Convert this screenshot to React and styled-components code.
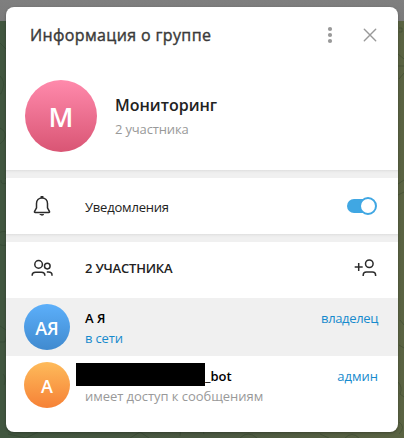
import React from 'react';
import styled, { createGlobalStyle } from 'styled-components';

const GlobalStyle = createGlobalStyle`
  * { box-sizing: border-box; }
  body { margin: 0; font-family: 'Open Sans', 'Noto Sans', sans-serif; font-size: 13px; color: #222; }
`;

const Backdrop = styled.div`
  position: relative;
  width: 404px;
  height: 438px;
  padding: 7px 6px 6px;
  overflow: hidden;
  background: linear-gradient(#7f7f7f, #7b7b7b) top / 100% 21px no-repeat,
    linear-gradient(90deg, #41563f, #4a5841 50%, #5a6342);
`;

const Doodles = styled.svg`
  position: absolute;
  inset: 0;
  fill: none;
  stroke: #2c3c28;
  stroke-opacity: 0.35;
`;

const Card = styled.main`
  position: relative;
  height: 425px;
  border-radius: 8px;
  background: #fff;
  overflow: hidden;
  box-shadow: 0 1px 3px rgba(0, 0, 0, 0.3);
`;

const Header = styled.header`
  display: flex;
  align-items: center;
  height: 56px;
  padding: 0 18px 0 24px;
`;

const Title = styled.h1`
  flex: 1;
  margin: 0;
  font-size: 16px;
  line-height: 24px;
  font-weight: 400;
  letter-spacing: 0.37px;
  -webkit-text-stroke: 0.4px #3a3a3a;
  color: #3a3a3a;
`;

const IconButton = styled.button`
  display: flex;
  padding: 0;
  border: 0;
  background: none;
  margin-left: ${(p) => p.$gap || 0}px;
`;

const Profile = styled.section`
  display: flex;
  height: 107px;
  padding: 17px 19px 0;
`;

const Avatar = styled.div`
  flex: none;
  display: flex;
  align-items: center;
  justify-content: center;
  width: ${(p) => p.$size}px;
  height: ${(p) => p.$size}px;
  border-radius: 50%;
  background: linear-gradient(${(p) => p.$from}, ${(p) => p.$to});
  color: #fff;
  font-size: ${(p) => p.$font}px;
  font-weight: 600;
  line-height: 1;
  padding-top: 1px;
`;

const ProfileText = styled.div`
  display: flex;
  flex-direction: column;
  gap: 2px;
  margin-left: 18px;
  padding-top: 13px;
`;

const Name = styled.h2`
  margin: 0;
  font-size: 16px;
  line-height: 24px;
  font-weight: 600;
  color: #222;
`;

const Status = styled.div`
  line-height: 20px;
  white-space: nowrap;
  letter-spacing: ${(p) => p.$tracking || 0}px;
  color: ${(p) => (p.$active ? '#168acd' : '#999')};
`;

const Divider = styled.div`
  height: 8px;
  background: linear-gradient(#dfdfdf, #ececec 2px, #f0f0f0 4px);
`;

const Row = styled.section`
  display: flex;
  align-items: center;
  height: 56px;
  padding: 0 20px 0 24px;
`;

const RowIcon = styled.div`
  display: flex;
  width: 55px;
`;

const RowLabel = styled.div`
  flex: 1;
  padding-top: ${(p) => p.$top || 0}px;
  padding-bottom: ${(p) => p.$bottom || 0}px;
  line-height: 20px;
  letter-spacing: -0.2px;
  font-weight: ${(p) => (p.$strong ? 600 : 400)};
  color: #222;
`;

const Switch = styled.div`
  display: flex;
  justify-content: flex-end;
  align-items: center;
  width: 28px;
  height: 14px;
  margin-right: 3px;
  border-radius: 7px;
  background: #40a7e3;
`;

const Knob = styled.div`
  flex: none;
  width: 18px;
  height: 18px;
  margin-right: -2px;
  border: 2px solid #40a7e3;
  border-radius: 50%;
  background: #fff;
`;

const Member = styled.article`
  display: flex;
  height: 58px;
  padding: 6px 20px 0 18px;
  background: ${(p) => (p.$selected ? '#f0f0f0' : '#fff')};
`;

const MemberText = styled.div`
  flex: 1;
  min-width: 0;
  margin-left: 15px;
  padding-top: 4px;
`;

const MemberName = styled.div`
  display: flex;
  height: 20px;
  line-height: 20px;
  font-weight: 600;
  color: #000;
`;

const Redaction = styled.span`
  width: 129px;
  height: 23px;
  margin: -3px 0 0 -9px;
  background: #000;
`;

const Role = styled.div`
  padding-top: 4px;
  line-height: 20px;
  letter-spacing: ${(p) => p.$tracking || 0}px;
  color: #168acd;
`;

const Glyph = styled.svg`
  display: block;
  fill: none;
  stroke: ${(p) => p.$color || '#2b2b2b'};
  stroke-width: ${(p) => p.$weight || 1.5};
  stroke-linecap: round;
  stroke-linejoin: round;
`;

const MoreIcon = () => (
  <Glyph width="6" height="18" viewBox="0 0 6 18" $color="none">
    <g fill="#999">
      <circle cx="3" cy="3" r="2.1" />
      <circle cx="3" cy="9" r="2.1" />
      <circle cx="3" cy="15" r="2.1" />
    </g>
  </Glyph>
);

const CloseIcon = () => (
  <Glyph width="20" height="20" viewBox="0 0 20 20" $color="#999" $weight={1.4}>
    <path d="M4.3 4.3 15.7 15.7M15.7 4.3 4.3 15.7" />
  </Glyph>
);

const BellIcon = () => (
  <Glyph width="24" height="24" viewBox="0 0 24 24">
    <path d="M12 4c-3.400 0-5.500 2.400-5.500 5.600v4.300l-1.900 3.400c-.4.700-.1 1.200.6 1.200h13.600c.7 0 1-.5.6-1.200l-1.900-3.400V9.600c0-3.200-2.100-5.600-5.500-5.600z" />
    <path d="M11.300 3.100h1.400" strokeWidth="2" />
    <path d="M10.200 20.500h3.600c-.5.900-3.100.9-3.600 0z" fill="#2b2b2b" strokeWidth=".8" />
  </Glyph>
);

const GroupIcon = () => (
  <Glyph width="26" height="24" viewBox="0 0 26 24">
    <circle cx="8.600" cy="6.400" r="3.800" />
    <circle cx="17.300" cy="8.100" r="2.800" />
    <path d="M2.200 17.700v-.6c0-1.900 1.400-2.900 3.400-2.900h5.800c2 0 3.400 1 3.400 2.900v.6M16.800 14.100h1.700c2 0 3.500 1 3.500 3v.6" strokeLinecap="butt" />
  </Glyph>
);

const AddMemberIcon = () => (
  <Glyph width="26" height="24" viewBox="0 0 26 24">
    <circle cx="17.300" cy="5.700" r="3.800" />
    <path d="M11.200 18v-.9c0-2.100 1.200-3.100 3.200-3.100h6c2 0 3.200 1 3.200 3.100v.9M6.700 5v8M2.700 9h8" strokeLinecap="butt" />
  </Glyph>
);

export default function App() {
  return (
    <>
      <GlobalStyle />
      <Backdrop>
        <Doodles width="404" height="438">
          <path d="M0 43l6 6M0 76q5 5 3 12t-3 6M0 128q8 4 4 12l-4 4M5 178a3 3 0 1 1-4 2M6 232a7 7 0 1 0 0 13M0 326l6 4M0 342h5l2-8M3 374q4 4 1 11M8 434l18 4 12-6M130 438l10-6 9 6M180 436a12 12 0 0 1 24-2M240 438q8-8 17 0M320 434l9 4M345 438q7-7 14 0M398 54l6 5M398 66h6M404 73l-5 6M399 28h3v4h-3M398 184l6-4M398 195l6-3M400 320l4 5M399 345l5 3M398 382q5 5 2 12l4 3M399 422q7 5 0 12" />
        </Doodles>
        <Card>
          <Header>
            <Title>Информация о группе</Title>
            <IconButton aria-label="Меню"><MoreIcon /></IconButton>
            <IconButton aria-label="Закрыть" $gap={27}><CloseIcon /></IconButton>
          </Header>
          <Profile>
            <Avatar $size={72} $font={27} $from="#ff8aac" $to="#d95574">М</Avatar>
            <ProfileText>
              <Name>Мониторинг</Name>
              <Status $tracking={-0.15}>2 участника</Status>
            </ProfileText>
          </Profile>
          <Divider />
          <Row>
            <RowIcon><BellIcon /></RowIcon>
            <RowLabel $top={2}>Уведомления</RowLabel>
            <Switch><Knob /></Switch>
          </Row>
          <Divider />
          <Row>
            <RowIcon><GroupIcon /></RowIcon>
            <RowLabel $strong $bottom={4}>2 УЧАСТНИКА</RowLabel>
            <AddMemberIcon />
          </Row>
          <Member $selected>
            <Avatar $size={46} $font={18} $from="#5caffa" $to="#408acf">АЯ</Avatar>
            <MemberText>
              <MemberName>А Я</MemberName>
              <Status $active $tracking={-0.15}>в сети</Status>
            </MemberText>
            <Role $tracking={-0.35}>владелец</Role>
          </Member>
          <Member>
            <Avatar $size={46} $font={18} $from="#febb5b" $to="#f68136">А</Avatar>
            <MemberText>
              <MemberName><Redaction />_bot</MemberName>
              <Status $tracking={-0.05}>имеет доступ к сообщениям</Status>
            </MemberText>
            <Role>админ</Role>
          </Member>
        </Card>
      </Backdrop>
    </>
  );
}
